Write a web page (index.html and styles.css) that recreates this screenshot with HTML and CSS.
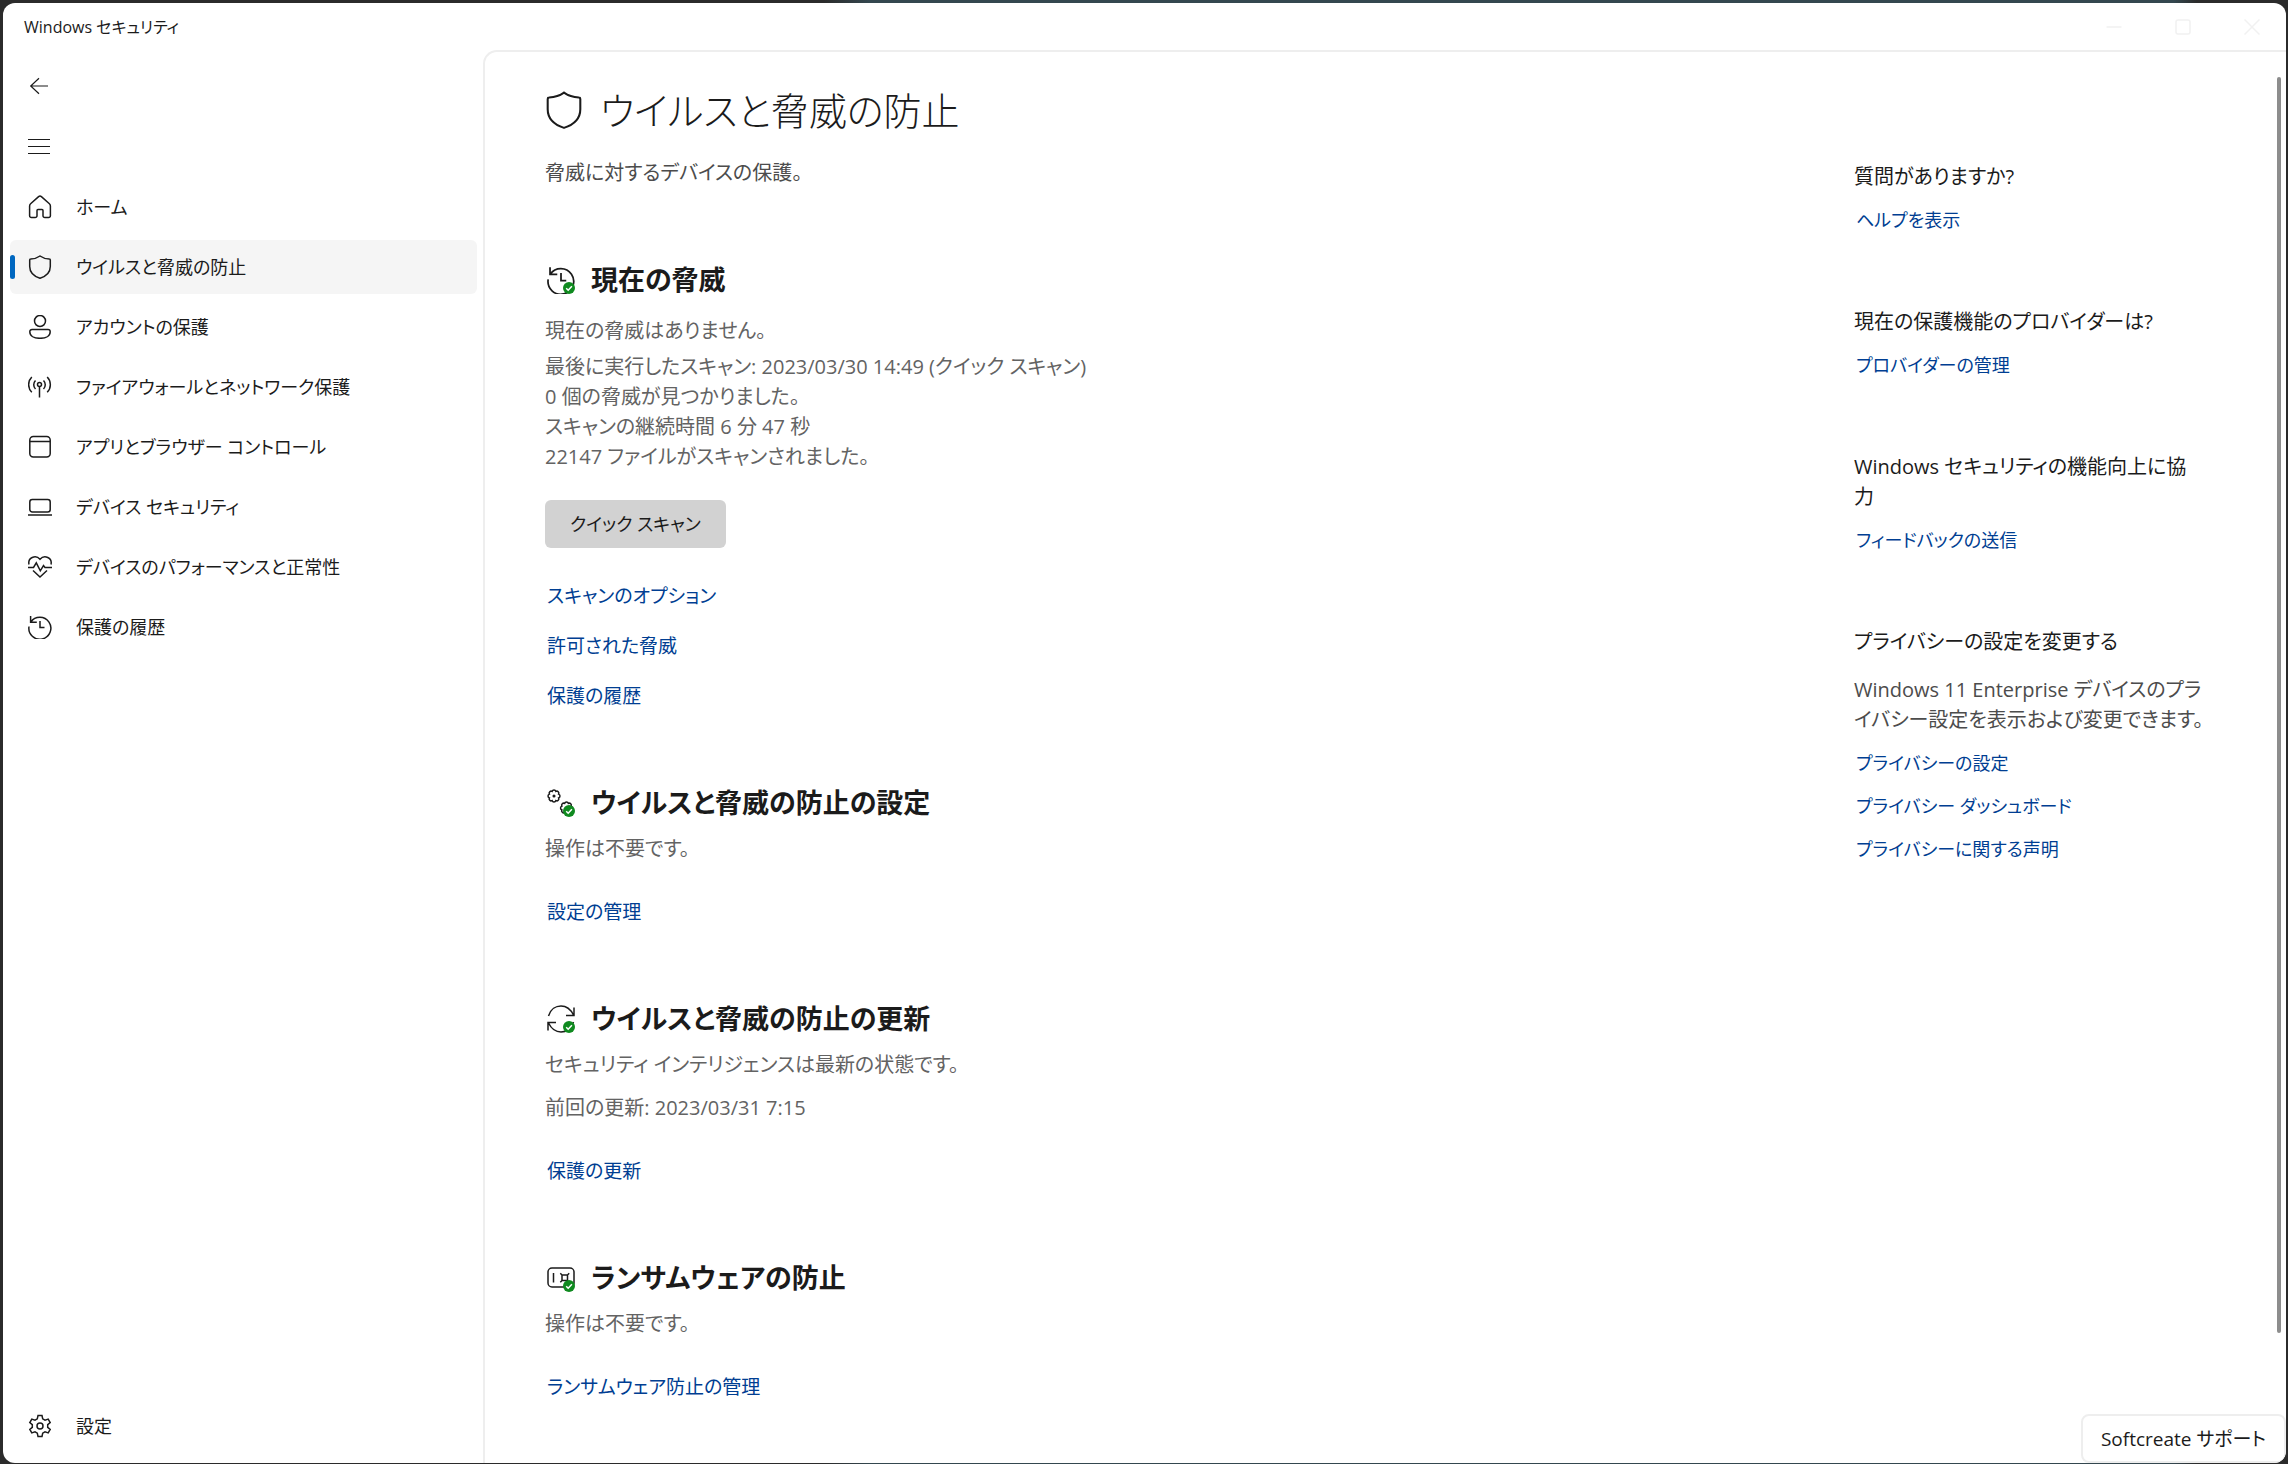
FILE: index.html
```html
<!DOCTYPE html>
<html lang="ja">
<head>
<meta charset="utf-8">
<meta name="viewport" content="width=device-width, initial-scale=1">
<title>Windows セキュリティ</title>
<link rel="stylesheet" href="styles.css">
</head>
<body>
<svg class="defs" aria-hidden="true">
  <symbol id="shield" viewBox="0 0 24 24"><path d="M12 1C9.200 3 6 3.900 2.600 4.100a.9.9 0 0 0-.9.9v6.500C1.700 17.300 6 21.300 12 23.300c6-2 10.300-6 10.300-11.800V5a.9.9 0 0 0-.9-.9C18 3.900 14.800 3 12 1Z"/></symbol>
  <symbol id="history" viewBox="0 0 24 24"><path d="M2.600 1v6.200h6.200M2.800 7A11 11 0 1 1 1 11.500M12 6v6.500h4.500"/></symbol>
  <symbol id="badge" viewBox="0 0 12 12"><circle class="badge-disc" cx="6" cy="6" r="6"/><path class="badge-tick" d="M3.200 6.200 5.200 8.200 8.900 4.300"/></symbol>
</svg>
<div class="window">
  <header class="titlebar">
    <span class="titlebar-name">Windows セキュリティ</span>
    <div class="caption-buttons">
      <button class="caption-button" aria-label="最小化"><svg viewBox="0 0 16 16"><path d="M0.500 8h15"/></svg></button>
      <button class="caption-button" aria-label="最大化"><svg viewBox="0 0 16 16"><rect x="1" y="1" width="14" height="14" rx="2"/></svg></button>
      <button class="caption-button" aria-label="閉じる"><svg viewBox="0 0 16 16"><path d="M.5.5l15 15M15.500.5l-15 15"/></svg></button>
    </div>
  </header>
  <div class="body">
    <nav class="sidebar">
      <button class="nav-item" aria-label="戻る"><svg class="nav-icon thin" viewBox="0 0 24 24"><path d="M20 11H2.500M11 3.200 2.700 11l8.300 7.800"/></svg></button>
      <button class="nav-item" aria-label="メニュー"><svg class="nav-icon thin" viewBox="0 0 24 24"><path d="M0 4.500h22M0 11.500h22M0 18.500h22"/></svg></button>
      <a class="nav-item" href="#home"><svg class="nav-icon" viewBox="0 0 24 24"><path d="M10.600 1.600a2.100 2.100 0 0 1 2.800 0l8 7.100a3 3 0 0 1 1 2.200v9.800a1.800 1.800 0 0 1-1.800 1.800h-3.800a1.800 1.800 0 0 1-1.800-1.800v-5.200a1 1 0 0 0-1-1h-4a1 1 0 0 0-1 1v5.200a1.800 1.800 0 0 1-1.800 1.800H3.400a1.800 1.800 0 0 1-1.800-1.800v-9.800a3 3 0 0 1 1-2.200Z"/></svg>ホーム</a>
      <a class="nav-item selected" href="#virus" aria-current="page"><svg class="nav-icon"><use href="#shield"/></svg>ウイルスと脅威の防止</a>
      <a class="nav-item" href="#account"><svg class="nav-icon" viewBox="0 0 24 24"><circle cx="12" cy="6" r="5.500"/><path d="M4 14.500h16a2.200 2.200 0 0 1 2.200 2.200c0 4.300-4.500 6.600-10.200 6.600S1.800 21 1.800 16.700A2.200 2.200 0 0 1 4 14.500Z"/></svg>アカウントの保護</a>
      <a class="nav-item" href="#firewall"><svg class="nav-icon" viewBox="0 0 24 24"><circle cx="11.500" cy="9.500" r="2"/><path d="M11.500 11.500v11M7.500 5.500a6 6 0 0 0 0 8.500M15.500 5.500a6 6 0 0 1 0 8.500M3.800 2C-.4 6.300-.4 13 3.800 17.300M19.200 2c4.200 4.300 4.200 11 0 15.300"/></svg>ファイアウォールとネットワーク保護</a>
      <a class="nav-item" href="#apps"><svg class="nav-icon" viewBox="0 0 24 24"><rect x="1.800" y="1.500" width="20.400" height="20.500" rx="3.500"/><path d="M1.800 6.500h20.400"/></svg>アプリとブラウザー コントロール</a>
      <a class="nav-item" href="#device"><svg class="nav-icon" viewBox="0 0 24 24"><rect x="1.800" y="4.500" width="20.400" height="12.500" rx="2.500"/><path d="M0 20h24"/></svg>デバイス セキュリティ</a>
      <a class="nav-item" href="#performance"><svg class="nav-icon" viewBox="0 0 24 24"><path d="M1 9.500C-.5 3 7.500-.8 12 4.300 16.500-.8 24.500 3 23 9.500M0 12.500h5.500l2.800-4.700 4 8 3.200-5.300 1.500 2h7M5 15.500l7 6.500 7-6.500"/></svg>デバイスのパフォーマンスと正常性</a>
      <a class="nav-item" href="#history-page"><svg class="nav-icon"><use href="#history"/></svg>保護の履歴</a>
      <a class="nav-item nav-settings" href="#settings"><svg class="nav-icon" viewBox="0 0 24 24"><circle cx="12" cy="12" r="3"/><path d="M10 1.500h4l.7 3.300 2.300 1.300 3.200-1 2 3.400L19.700 10.700v2.600l2.500 2.200-2 3.400-3.200-1-2.300 1.300-.7 3.300h-4l-.7-3.300L7 17.900l-3.200 1-2-3.400 2.500-2.200v-2.600L1.800 8.500l2-3.400 3.200 1 2.300-1.300Z"/></svg>設定</a>
    </nav>
    <div class="page">
      <main class="content">
        <h1 class="page-title"><svg class="title-icon"><use href="#shield"/></svg>ウイルスと脅威の防止</h1>
        <p class="subtitle">脅威に対するデバイスの保護。</p>

        <section class="section threats">
          <h2 class="section-title"><svg class="section-icon" viewBox="0 0 28 28"><use href="#history" width="28" height="28"/><use href="#badge" x="16" y="16" width="12" height="12"/></svg>現在の脅威</h2>
          <p class="status">現在の脅威はありません。</p>
          <p class="status scan">最後に実行したスキャン: 2023/03/30 14:49 (クイック スキャン)<br>0 個の脅威が見つかりました。<br>スキャンの継続時間 6 分 47 秒<br>22147 ファイルがスキャンされました。</p>
          <button class="scan-button">クイック スキャン</button>
          <div class="links">
            <a href="#options">スキャンのオプション</a>
            <a href="#allowed">許可された脅威</a>
            <a href="#history-page">保護の履歴</a>
          </div>
        </section>

        <section class="section">
          <h2 class="section-title"><svg class="section-icon" viewBox="0 0 28 28"><g id="cog"><circle cx="7" cy="7" r=".8"/><path d="M5.100 2.400A2 2 0 0 1 8.900 2.400 2 2 0 0 1 11.600 5.100 2 2 0 0 1 11.600 8.900 2 2 0 0 1 8.900 11.600 2 2 0 0 1 5.100 11.600 2 2 0 0 1 2.400 8.900 2 2 0 0 1 2.400 5.100 2 2 0 0 1 5.100 2.400Z"/></g><use href="#cog" x="12.500" y="12"/><use href="#badge" x="16" y="16" width="12" height="12"/></svg>ウイルスと脅威の防止の設定</h2>
          <p class="status">操作は不要です。</p>
          <div class="links"><a href="#manage">設定の管理</a></div>
        </section>

        <section class="section">
          <h2 class="section-title"><svg class="section-icon" viewBox="0 0 28 28"><path d="M1.500 11C3.500 4 9 1 14 1s9.500 3 12.500 9M27 2.500v8h-8M26.500 17C24.500 24 19 27 14 27S4.500 24 1.500 18M1 25.500v-8h8"/><use href="#badge" x="16" y="16" width="12" height="12"/></svg>ウイルスと脅威の防止の更新</h2>
          <p class="status">セキュリティ インテリジェンスは最新の状態です。</p>
          <p class="status updated">前回の更新: 2023/03/31 7:15</p>
          <div class="links"><a href="#updates">保護の更新</a></div>
        </section>

        <section class="section">
          <h2 class="section-title"><svg class="section-icon" viewBox="0 0 28 28"><rect x="1" y="4" width="26" height="19" rx="4"/><path d="M6.500 9v9.500M15 11h5.500v5.500H15ZM13.300 9.300 15 11M22.200 9.300 20.500 11M13.300 18.200l1.700-1.700"/><use href="#badge" x="16" y="16" width="12" height="12"/></svg>ランサムウェアの防止</h2>
          <p class="status">操作は不要です。</p>
          <div class="links"><a href="#ransomware">ランサムウェア防止の管理</a></div>
        </section>
      </main>

      <aside class="help">
        <section class="help-group">
          <h3 class="help-title">質問がありますか?</h3>
          <a href="#help">ヘルプを表示</a>
        </section>
        <section class="help-group">
          <h3 class="help-title">現在の保護機能のプロバイダーは?</h3>
          <a href="#providers">プロバイダーの管理</a>
        </section>
        <section class="help-group">
          <h3 class="help-title">Windows セキュリティの機能向上に協力</h3>
          <a href="#feedback">フィードバックの送信</a>
        </section>
        <section class="help-group">
          <h3 class="help-title">プライバシーの設定を変更する</h3>
          <p class="help-text">Windows 11 Enterprise デバイスのプライバシー設定を表示および変更できます。</p>
          <a href="#privacy">プライバシーの設定</a>
          <a href="#dashboard">プライバシー ダッシュボード</a>
          <a href="#statement">プライバシーに関する声明</a>
        </section>
      </aside>
    </div>
  </div>
  <div class="scroll-thumb"></div>
  <button class="support">Softcreate サポート</button>
</div>
</body>
</html>
```

FILE: styles.css
```css
:root {
  --text: #1b1b1b;
  --text-soft: #4c4c4c;
  --text-muted: #636363;
  --link: #003e92;
  --line: #eeeeee;
}

* {
  box-sizing: border-box;
}

body {
  margin: 0;
  min-height: 100vh;
  padding: 3px 2px 1px 3px;
  display: flex;
  background: linear-gradient(90deg, #2b2b2b 0 36%, #34474f 38% 95%, #2b2b2b 96%);
  color: var(--text);
  font-family: "Open Sans", "Noto Sans CJK JP", sans-serif;
  font-size: 20px;
  line-height: 30px;
  font-feature-settings: "palt";
}

h1,
h2,
h3,
p {
  margin: 0;
  font-weight: 400;
}

button {
  border: 0;
  padding: 0;
  background: none;
  color: inherit;
  font: inherit;
  font-feature-settings: inherit;
}

a {
  color: var(--link);
  text-decoration: none;
}

svg {
  flex: none;
  fill: none;
  stroke: currentColor;
  stroke-width: 1.5;
}

.defs {
  position: absolute;
  width: 0;
  height: 0;
}

.badge-disc {
  fill: #0f8a1f;
  stroke: none;
}

.badge-tick {
  stroke: #ffffff;
}

.window {
  position: relative;
  flex: 1;
  display: flex;
  flex-direction: column;
  overflow: hidden;
  border-radius: 12px;
  background: #ffffff;
}

.titlebar {
  display: flex;
  justify-content: space-between;
  align-items: center;
  height: 47px;
  padding-left: 21px;
  font-size: 16px;
}

.caption-buttons {
  display: flex;
}

.caption-button {
  display: flex;
  align-items: center;
  justify-content: center;
  width: 69px;
  height: 47px;
  color: #f1f1f1;
}

.caption-button svg {
  width: 16px;
  height: 16px;
}

.body {
  flex: 1;
  display: flex;
}

.sidebar {
  width: 480px;
  flex: none;
  display: flex;
  flex-direction: column;
  gap: 6px;
  padding: 10px 6px 10px 7px;
}

.nav-item {
  position: relative;
  display: flex;
  align-items: center;
  gap: 24px;
  height: 54px;
  padding-left: 18px;
  border-radius: 6px;
  color: var(--text);
  font-size: 18px;
}

.nav-icon {
  width: 24px;
  height: 24px;
}

.thin {
  stroke-width: 1.2;
}

.selected {
  background: #f5f5f5;
}

.selected::before {
  content: "";
  position: absolute;
  left: 0;
  top: 15px;
  width: 5px;
  height: 24px;
  border-radius: 3px;
  background: #0067c0;
}

.nav-settings {
  margin-top: auto;
}

.page {
  flex: 1;
  display: flex;
  padding: 32px 76px 56px 60px;
  border: solid var(--line);
  border-width: 2px 0 0 2px;
  border-radius: 14px 0 0 0;
}

.content {
  flex: 1;
}

.page-title {
  display: flex;
  align-items: center;
  gap: 17px;
  font-size: 38px;
  font-weight: 300;
  line-height: 52px;
}

.title-icon {
  width: 38px;
  height: 38px;
  stroke-width: 1.3;
}

.subtitle {
  margin-top: 22px;
  color: var(--text-soft);
}

.section {
  margin-top: 72px;
}

.section-title {
  display: flex;
  align-items: center;
  gap: 16px;
  margin-bottom: 11px;
  font-size: 27px;
  font-weight: 700;
  line-height: 40px;
}

.section-icon {
  width: 28px;
  height: 28px;
  margin-left: 2px;
}

.threats .section-title {
  margin-bottom: 16px;
}

.status {
  color: var(--text-muted);
}

.scan {
  margin-top: 6px;
}

.updated {
  margin-top: 13px;
}

.scan-button {
  height: 48px;
  margin-top: 28px;
  padding: 0 25px;
  border-radius: 6px;
  background: #d2d2d2;
  font-size: 18px;
}

.links {
  display: flex;
  flex-direction: column;
  align-items: flex-start;
  gap: 20px;
  margin-top: 33px;
  padding-left: 2px;
  font-size: 19px;
}

.help {
  width: 356px;
  flex: none;
  display: flex;
  flex-direction: column;
  gap: 72px;
  padding-top: 78px;
}

.help-group {
  display: flex;
  flex-direction: column;
  align-items: flex-start;
  gap: 13px;
}

.help-group a {
  padding-left: 2px;
  font-size: 18px;
}

.help-title {
  padding-right: 12px;
  font-size: 20px;
}

.help-text {
  margin-top: 5px;
  color: var(--text-soft);
}

.scroll-thumb {
  position: absolute;
  top: 74px;
  right: 5px;
  width: 4px;
  height: 86%;
  border-radius: 2px;
  background: #8d8d8d;
}

.support {
  position: absolute;
  right: 0;
  bottom: 0;
  height: 49px;
  padding: 0 18px;
  border: 2px solid var(--line);
  border-radius: 8px;
  background: #ffffff;
  font-size: 19px;
}
```
